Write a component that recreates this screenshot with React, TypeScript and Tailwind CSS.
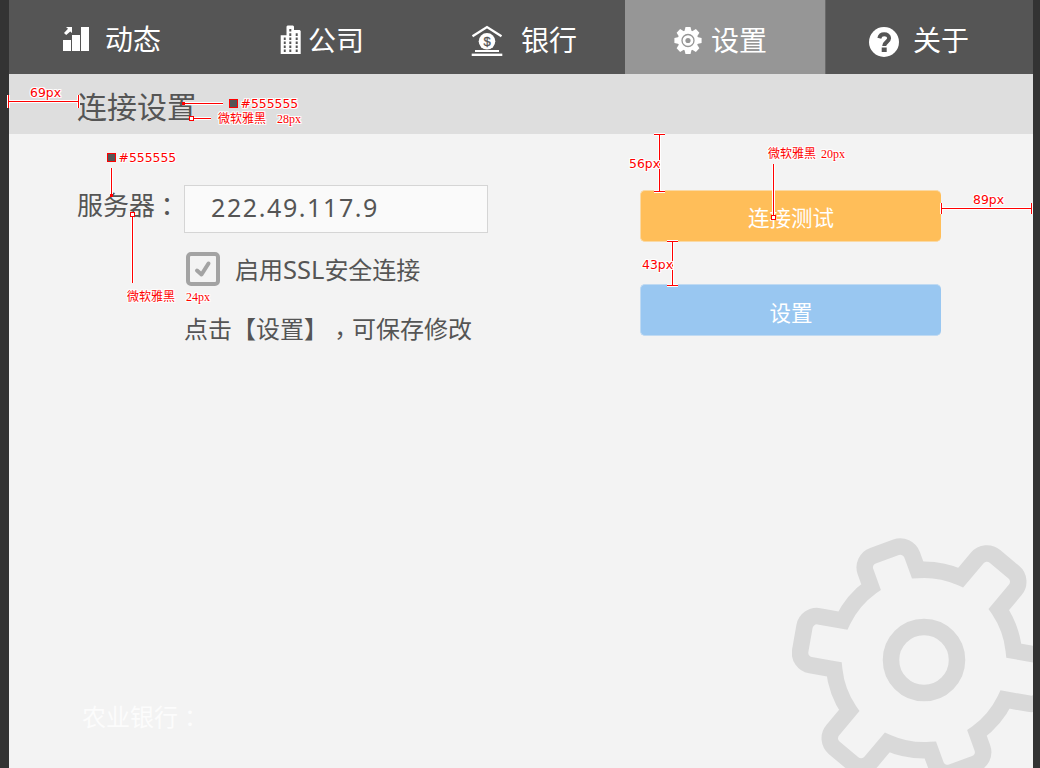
import React from "react";

const CJK = "font-['Noto_Sans','Noto_Sans_CJK_SC',sans-serif] [text-spacing-trim:space-all]";

/* ---------- icons ---------- */

function ChartIcon() {
  return (
    <svg width="28" height="26" viewBox="0 0 28 26" fill="#fff" className="block">
      <rect x="1" y="14" width="8" height="11" />
      <rect x="10" y="9" width="8" height="16" />
      <rect x="19" y="1" width="8" height="24" />
      <path d="M4 1h6v6L8.300 5.500 4.200 9 2 7l4-4.300z" />
    </svg>
  );
}

function BuildingIcon() {
  const rows = [12.5, 16.5, 20.5, 24.5];
  return (
    <svg width="22" height="30" viewBox="0 0 22 30" className="block">
      <path fill="#fff" d="M.700 10.300H6.500V1.500L7.500 .500H13l1 1V5h5.700l1 1v23H.700z" />
      <g fill="#555">
        {rows.map((y) => (
          <path key={y} d={`M3.800 ${y}h1.900v2.600h-1.900zM9.300 ${y}h2v2.600h-2zM15.700 ${y}h2v2.600h-2z`} />
        ))}
        <path d="M9.300 4h2v2.600h-2zM9.300 8.300h2v2.600h-2zM15.700 8.300h2v2.600h-2z" />
      </g>
    </svg>
  );
}

function BankIcon() {
  return (
    <svg width="32" height="32" viewBox="0 0 32 32" className="block">
      <path d="M1.500 11.300L16 2l14.500 9.300" fill="none" stroke="#fff" strokeWidth="2.300" />
      <circle cx="16" cy="16.300" r="8.300" fill="#fff" />
      <text x="16" y="20.900" textAnchor="middle" fontSize="13" fill="#555" stroke="#555" strokeWidth=".3" fontFamily="Liberation Sans, sans-serif">$</text>
      <rect x="4" y="25" width="24" height="2" fill="#fff" />
      <rect x=".700" y="28.600" width="30.600" height="2.400" fill="#fff" />
    </svg>
  );
}

function GearIcon() {
  return (
    <svg width="28" height="28" viewBox="-14 -14.500 28 28" className="block">
      <g fill="#fff">
        <circle r="10.300" />
        {[0, 45, 90, 135, 180, 225, 270, 315].map((a) => (
          <path key={a} transform={`rotate(${a})`} d="M-3.600 -9L-2.500 -13.600H2.500L3.600 -9z" />
        ))}
      </g>
      <circle r="6" fill="none" stroke="#969696" strokeWidth="1.300" />
      <circle r="2.600" fill="#969696" />
    </svg>
  );
}

function HelpIcon() {
  return (
    <svg width="30" height="30" viewBox="0 0 30 30" className="block">
      <circle cx="15" cy="15" r="15" fill="#fff" />
      <path d="M10.300 11.200C11 8.300 13 7.300 15.200 7.300c2.700 0 4.900 1.500 4.900 4 0 3.500-4.900 3.700-4.900 7.700" fill="none" stroke="#555" strokeWidth="4" />
      <rect x="12.700" y="20.500" width="5" height="4.500" fill="#555" />
    </svg>
  );
}

/* ---------- decorative cog ---------- */

const TEETH: [number, number][] = [
  [-170, 123.5],
  [-110, 115.5],
  [-50, 125],
  [10, 123.5],
  [70, 115],
  [130, 125],
];

function cogPath(): string {
  const R = 90.3, half = 24.8, r = 12.5;
  const base = Math.sqrt(R * R - half * half);
  const pt = (x: number, y: number, deg: number) => {
    const a = (deg * Math.PI) / 180;
    return `${(x * Math.cos(a) - y * Math.sin(a)).toFixed(2)} ${(x * Math.sin(a) + y * Math.cos(a)).toFixed(2)}`;
  };
  return (
    TEETH.map(
      ([d, tip], i) =>
        `${i === 0 ? "M" : `A${R} ${R} 0 0 1 `}${pt(base, -half, d)}` +
        `L${pt(tip - r, -half, d)}A${r} ${r} 0 0 1 ${pt(tip, -half + r, d)}` +
        `L${pt(tip, half - r, d)}A${r} ${r} 0 0 1 ${pt(tip - r, half, d)}L${pt(base, half, d)}`
    ).join("") + `A${R} ${R} 0 0 1 ${pt(base, -half, -170)}Z`
  );
}

function Cog() {
  return (
    <svg width="241" height="240" viewBox="-132 -132 241 240" className="absolute right-0 bottom-0">
      <g fill="none" stroke="#d9d9d9" strokeWidth="16.500">
        <path d={cogPath()} />
        <circle r="33" />
      </g>
    </svg>
  );
}

/* ---------- header ---------- */

function Tab({ icon, label, className, gap }: { icon: React.ReactNode; label: string; className: string; gap: string }) {
  return (
    <div className={`flex h-full items-start ${className}`}>
      {icon}
      <span className={`text-[28px] leading-[40px] whitespace-nowrap ${gap}`}>{label}</span>
    </div>
  );
}

/* Full-width punctuation centred in its cell */
function Punct({ drop, children }: { drop: string; children: React.ReactNode }) {
  return (
    <span lang="zh-TW" className={`relative font-['Noto_Sans_CJK_TC',sans-serif] leading-none ${drop}`}>
      {children}
    </span>
  );
}

/* ---------- annotations ---------- */

const HALO =
  "[text-shadow:1px_0_#fff,-1px_0_#fff,0_1px_#fff,0_-1px_#fff,1px_1px_#fff,-1px_-1px_#fff,1px_-1px_#fff,-1px_1px_#fff]";

function Note({ at, children }: { at: string; children: React.ReactNode }) {
  return (
    <span className={`absolute font-['DejaVu_Sans',sans-serif] text-[12.400px] leading-[16px] whitespace-nowrap text-[#f00] ${HALO} ${at}`}>
      {children}
    </span>
  );
}

function FontNote({ at, size, gap }: { at: string; size: string; gap: string }) {
  return (
    <span className={`absolute flex font-['Liberation_Serif','Noto_Sans_CJK_SC',serif] text-[12px] leading-[16px] whitespace-nowrap text-[#f00] ${HALO} ${gap} ${at}`}>
      <span>微软雅黑</span>
      <span>{size}</span>
    </span>
  );
}

const RULES =
  "M8.500 95v13M9 101.500h69M78.500 95v13M183 103.500h40M192 118.500h19M111.500 168v27M132.500 215v68" +
  "M654 134.500h11M659.500 134v57M654 191.500h11M773.500 164v52M941.500 203v11M941 208.500h90M1031.500 203v11" +
  "M667 241.500h11M672.500 241v45M667 285.500h11";

function Annotations() {
  return (
    <div className="pointer-events-none absolute inset-0">
      <svg width="1040" height="768" className="absolute inset-0" shapeRendering="crispEdges">
        <path d={RULES} stroke="#fff" strokeWidth="3" fill="none" />
        <path d={RULES} stroke="#f00" strokeWidth="1" fill="none" />
        <path d="M182 102h3v3h-3zM110 194h3v3h-3z" fill="#f00" />
        <path d="M189.500 116.500h4v4h-4zM130.500 212.500h4v4h-4zM771.500 215.500h4v4h-4z" fill="#fff" stroke="#f00" />
        <path d="M229.500 99.500h8v8h-8zM107.500 153.500h8v8h-8z" fill="#555" stroke="#f00" />
      </svg>
      <Note at="left-[30px] top-[85px]">69px</Note>
      <Note at="left-[240.500px] top-[96px]">#555555</Note>
      <FontNote at="left-[218px] top-[111px]" size="28px" gap="gap-[11px]" />
      <Note at="left-[118.500px] top-[150px]">#555555</Note>
      <FontNote at="left-[127px] top-[289px]" size="24px" gap="gap-[11px]" />
      <Note at="left-[629px] top-[156px]">56px</Note>
      <Note at="left-[642px] top-[257px]">43px</Note>
      <Note at="left-[973px] top-[192px]">89px</Note>
      <FontNote at="left-[768px] top-[146px]" size="20px" gap="gap-[5px]" />
    </div>
  );
}

export default function App() {
  return (
    <div className={`relative h-[768px] w-[1040px] overflow-hidden bg-[#333] pr-[7px] pl-[9px] text-[#555] ${CJK}`}>
      <div className="relative flex h-full flex-col overflow-hidden bg-[#f3f3f3]">
        <Cog />
        <header className="grid h-[74px] shrink-0 grid-cols-[205px_205px_206px_200px_208px] bg-[#555] text-white">
          <Tab icon={<ChartIcon />} label="动态" className="pt-[26px] pl-[53px]" gap="ml-[15px] -mt-[7px]" />
          <Tab icon={<BuildingIcon />} label="公司" className="pt-[25px] pl-[66px]" gap="ml-[6px] -mt-[5px]" />
          <Tab icon={<BankIcon />} label="银行" className="pt-[25px] pl-[52px]" gap="ml-[18px] -mt-[5px]" />
          <Tab icon={<GearIcon />} label="设置" className="bg-[#969696] pt-[26px] pl-[49px]" gap="ml-[9px] -mt-[6px]" />
          <Tab icon={<HelpIcon />} label="关于" className="border-l border-[#6a6a6a] pt-[27px] pl-[43px]" gap="ml-[14px] -mt-[7px]" />
        </header>

        <div className="flex h-[60px] shrink-0 items-center bg-[#dedede] pl-[68px]">
          <h1 className="mt-[5px] text-[30px] leading-[40px]">连接设置</h1>
        </div>

        <main className="flex flex-1">
          <section className="w-[631px] pt-[51px] pl-[68px]">
            <div className="flex">
              <label className="w-[107px] text-[26px] leading-[40px] whitespace-nowrap">
                服务器<Punct drop="top-[1px] -left-[1px]">：</Punct>
              </label>
              <div className="flex h-[48px] w-[304px] items-center border border-[#d5d5d5] bg-[#fafafa] pb-[2px] pl-[26px] text-[25px] tracking-[1.600px]">
                222.49.117.9
              </div>
            </div>
            <div className="mt-[19px] ml-[109px] flex">
              <svg width="34" height="34" viewBox="0 0 34 34" fill="none" stroke="#a3a3a3">
                <rect x="2" y="2" width="30" height="30" rx="3" strokeWidth="4" />
                <path d="M11 18.500l4.500 4 7-11" strokeWidth="4" strokeLinecap="round" strokeLinejoin="round" />
              </svg>
              <span className="ml-[15px] h-[36px] text-[24px] leading-[36px] whitespace-nowrap">
                启用<span className="text-[25.500px] leading-none">SSL</span>安全连接
              </span>
            </div>
            <p className="mt-[23px] ml-[107px] h-[36px] text-[24px] leading-[36px] whitespace-nowrap">
              点击【设置】<Punct drop="top-[6px]">，</Punct>可保存修改
            </p>
            <p className="mt-[352px] ml-[5px] h-[36px] text-[24px] leading-[36px] whitespace-nowrap text-[#fcfcfc]">
              农业银行<Punct drop="top-[1px]">：</Punct>
            </p>
          </section>
          <section className="flex flex-col gap-[42px] pt-[56px]">
            <button className="h-[52px] w-[301px] rounded-[5px] border border-r-0 border-[#fad9a4] bg-[#ffbe59] pt-[4px] text-[21.500px] text-white">连接测试</button>
            <button className="h-[52px] w-[301px] rounded-[5px] border border-r-0 border-[#c0daf2] bg-[#99c7f1] pt-[6px] text-[21.500px] text-white">设置</button>
          </section>
        </main>
      </div>
      <Annotations />
    </div>
  );
}
